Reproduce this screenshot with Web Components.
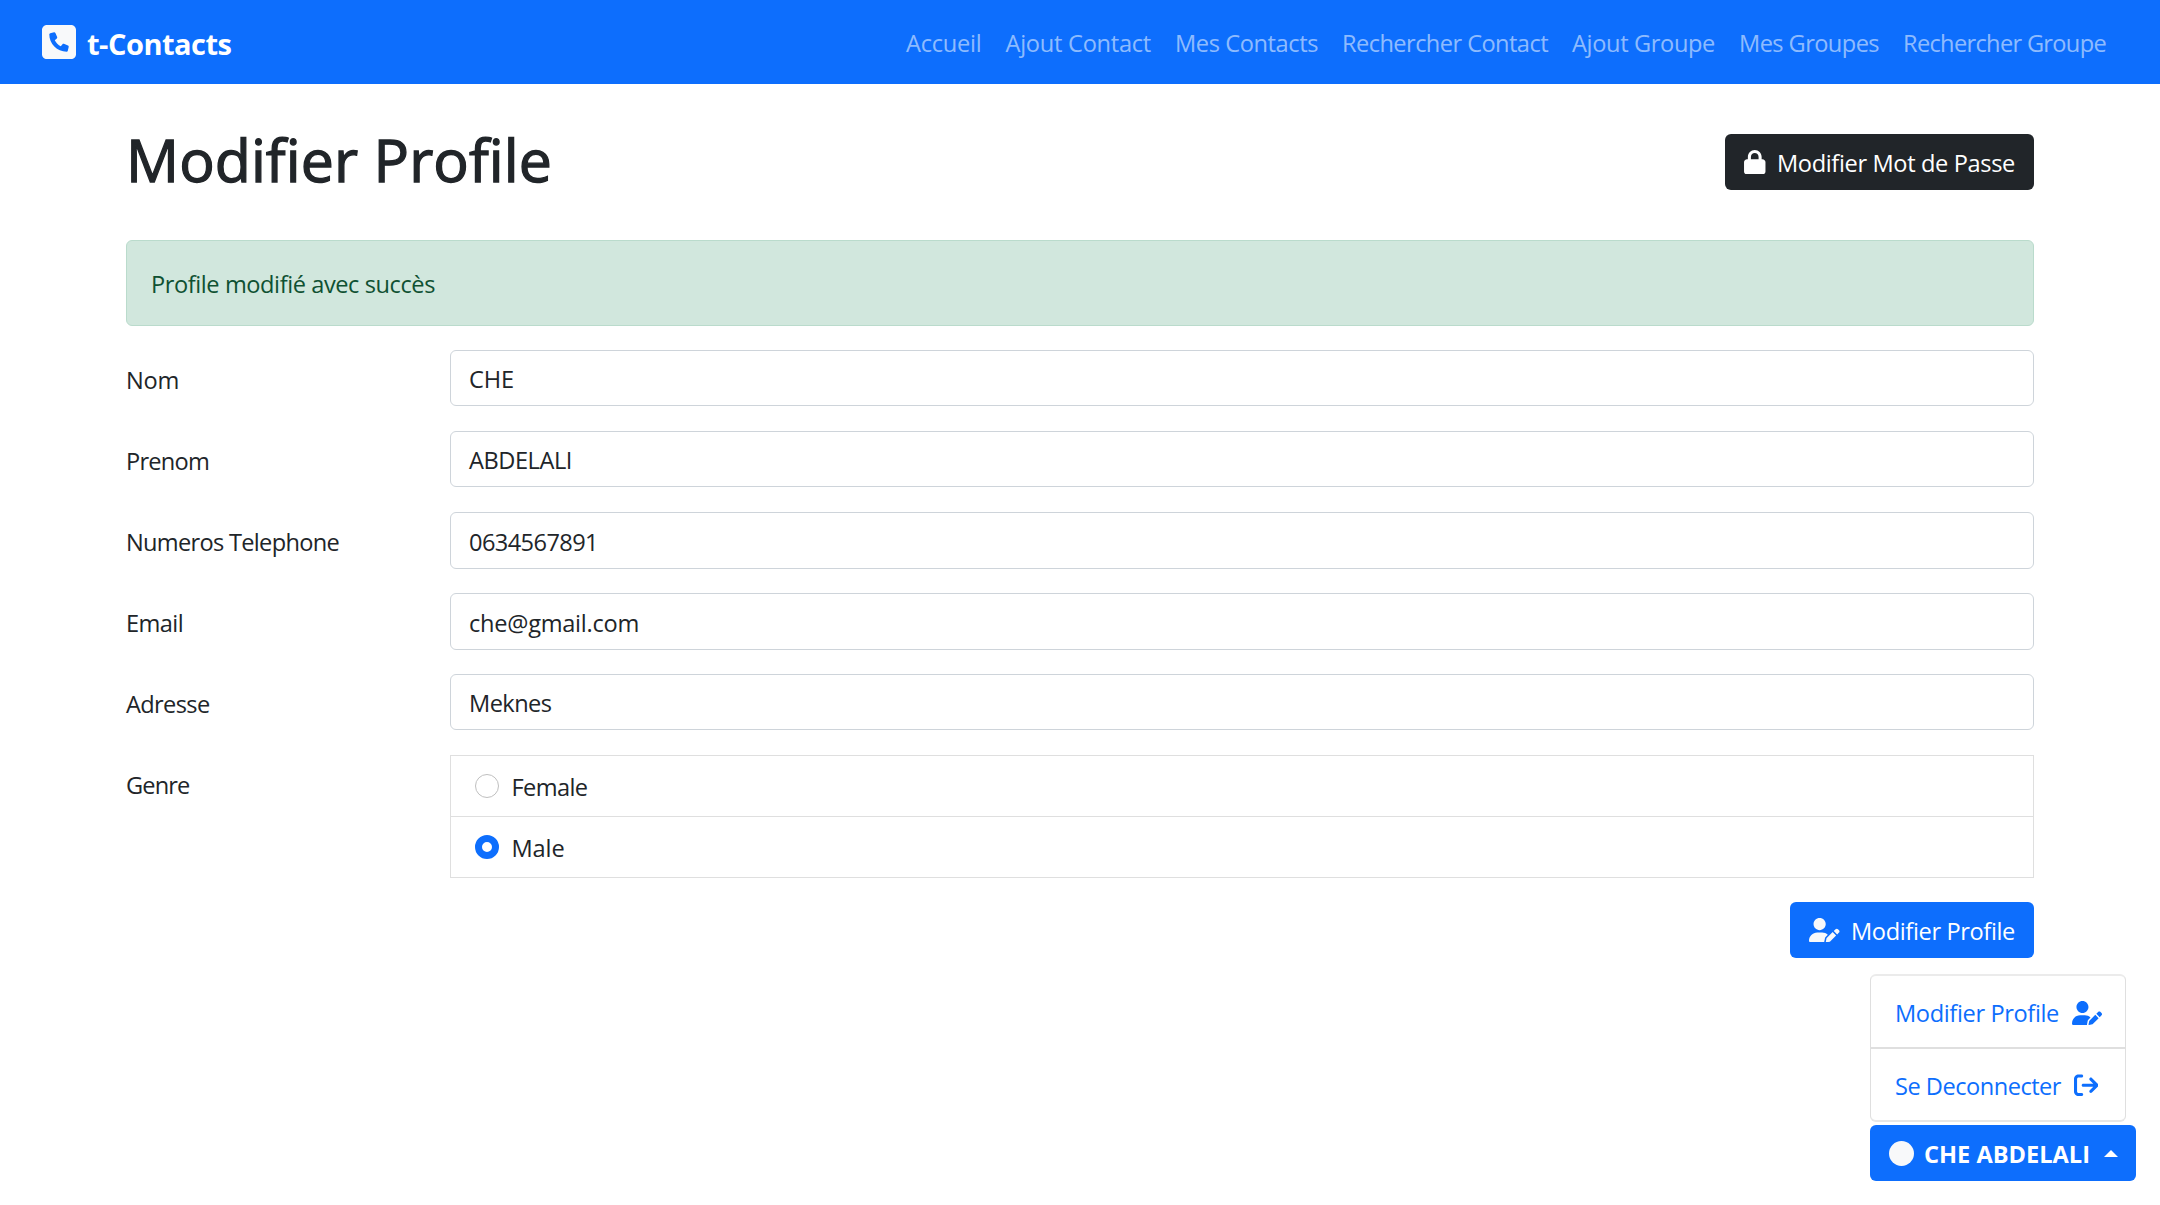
<!DOCTYPE html>
<html lang="fr">
<head>
<meta charset="utf-8">
<title>t-Contacts</title>
<style>
html,body{margin:0;padding:0;background:#fff}
body{font-family:"Open Sans","Noto Sans",sans-serif;font-size:23.6px;line-height:36px;color:#212529;height:1205px;overflow:hidden;position:relative}
</style>
</head>
<body>
<contacts-app></contacts-app>
<script>
const define = (name, html, setup) => customElements.define(name, class extends HTMLElement {
  connectedCallback() {
    if (this.shadowRoot) return;
    const t = document.createElement('template');
    t.innerHTML = html;
    this.attachShadow({ mode: 'open' }).append(t.content.cloneNode(true));
    if (setup) setup(this, this.shadowRoot);
  }
});

/* Text run tracked to an exact advance width (w). */
define('fit-text', `<style>:host{display:block;white-space:nowrap;flex:none;width:max-content}</style><slot></slot>`, el => {
  const w = +el.getAttribute('w');
  const n = [...el.textContent].length;
  const now = el.getBoundingClientRect().width;
  el.style.letterSpacing = ((w - now) / n) + 'px';
  el.style.width = w + 'px';
});

const ICONS = {
  phone: ['0 32 448 448', 'M384 32H64C28.65 32 0 60.65 0 96v320c0 35.35 28.65 64 64 64h320c35.35 0 64-28.65 64-64V96C448 60.65 419.3 32 384 32zM351.6 321.5l-11.62 50.39c-1.633 7.125-7.9 12.11-15.24 12.11c-126.1 0-228.7-102.6-228.7-228.8c0-7.328 4.984-13.59 12.11-15.22l50.38-11.63c7.344-1.703 14.88 2.109 17.93 9.062l23.27 54.28c2.719 6.391 .8828 13.83-4.492 18.22L168.3 232c16.99 34.61 45.14 62.58 79.74 79.57l22.02-26.88c4.4-5.375 11.8-7.2 18.2-4.5l54.31 23.28C349.5 306.5 353.3 314.1 351.6 321.5z'],
  lock: ['0 0 448 512', 'M80 192V144C80 64.47 144.5 0 224 0C303.5 0 368 64.47 368 144V192H384C419.3 192 448 220.7 448 256V448C448 483.3 419.3 512 384 512H64C28.65 512 0 483.3 0 448V256C0 220.7 28.65 192 64 192H80zM144 192H304V144C304 99.82 268.2 64 224 64C179.8 64 144 99.82 144 144V192z'],
  pen: ['0 0 640 512', 'M223.1 256c70.7 0 128-57.31 128-128s-57.3-128-128-128C152.4 0 95.1 57.31 95.1 128S152.4 256 223.1 256zM274.7 304H173.3C77.61 304 0 381.7 0 477.4C0 496.5 15.52 512 34.66 512h286.4c-1.246-5.531-1.43-11.31-.2832-17.04l14.28-71.41c1.943-9.723 6.676-18.56 13.68-25.56l45.72-45.72C363.7 322.4 321.2 304 274.7 304zM371.4 420.6c-2.514 2.512-4.227 5.715-4.924 9.203l-14.28 71.41c-1.258 6.289 4.293 11.84 10.59 10.59l71.42-14.29c3.482-.6992 6.682-2.406 9.195-4.922l125.3-125.3l-72.01-72.01L371.4 420.6zM629.5 255.7l-21.1-21.11c-14.06-14.06-36.85-14.06-50.91 0l-38.13 38.14l72.01 72.01l38.13-38.13C643.5 292.5 643.5 269.7 629.5 255.7z'],
  exit: ['0 0 512 512', 'M160 416H96c-17.67 0-32-14.33-32-32V128c0-17.67 14.33-32 32-32h64c17.67 0 32-14.33 32-32S177.7 32 160 32H96C42.98 32 0 74.98 0 128v256c0 53.02 42.98 96 96 96h64c17.67 0 32-14.33 32-32S177.7 416 160 416zM502.6 233.4l-128-128c-12.51-12.51-32.76-12.49-45.25 0c-12.5 12.5-12.5 32.75 0 45.25L402.8 224H192C174.3 224 160 238.3 160 256s14.31 32 32 32h210.8l-73.38 73.38c-12.5 12.5-12.5 32.75 0 45.25s32.75 12.5 45.25 0l128-128C515.1 266.1 515.1 245.9 502.6 233.4z'],
  circle: ['0 0 512 512', 'M256 0a256 256 0 1 0 0 512a256 256 0 1 0 0-512z']
};
define('app-icon', `<style>:host{display:block;flex:none}svg{display:block;fill:currentColor}</style><svg><path/></svg>`, (el, r) => {
  const [box, d] = ICONS[el.getAttribute('name')];
  const s = r.querySelector('svg');
  s.setAttribute('viewBox', box);
  s.setAttribute('width', el.getAttribute('width'));
  s.setAttribute('height', el.getAttribute('height'));
  r.querySelector('path').setAttribute('d', d);
});

define('nav-bar', `<style>
:host{display:flex;height:84px;box-sizing:border-box;padding:0 54px 0 42px;background:#0d6efd;align-items:center;justify-content:space-between}
.brand{display:flex;align-items:center;gap:11px;color:#fff;font-weight:700;font-size:29px}
.brand app-icon{color:#f8f9fa}
.brand fit-text{padding-top:3px}
nav{display:flex;gap:24px;color:rgba(255,255,255,.55);padding-top:2px}
</style>
<div class="brand"><app-icon name="phone" width="34" height="34"></app-icon><fit-text w="144.5">t-Contacts</fit-text></div>
<nav>
<fit-text w="75.5">Accueil</fit-text><fit-text w="145.5">Ajout Contact</fit-text><fit-text w="143">Mes Contacts</fit-text><fit-text w="206">Rechercher Contact</fit-text><fit-text w="143">Ajout Groupe</fit-text><fit-text w="140">Mes Groupes</fit-text><fit-text w="203">Rechercher Groupe</fit-text>
</nav>`);

define('app-button', `<style>
:host{display:flex;align-items:center;box-sizing:border-box;height:56px;border-radius:6px;padding:0 19px;color:#fff;background:#0d6efd;flex:none}
:host([dark]){background:#212529}
</style><slot></slot>`);

define('form-row', `<style>
:host{display:flex;height:56px;margin-bottom:25px}
:host([tall]){height:57px;margin-bottom:24px}
.label{width:324px;padding-top:12px;flex:none}
.box{flex:1;display:flex;align-items:center;box-sizing:border-box;border:1px solid #ced4da;border-radius:6px;padding:2px 18px 0}
:host([tall]) .box{padding-top:3px}
</style><div class="label"><slot name="label"></slot></div><div class="box"><slot></slot></div>`);

define('radio-option', `<style>
:host{display:flex;height:60px;align-items:center;padding-left:24px;gap:12px;border-bottom:1px solid #dfdfdf}
i{box-sizing:border-box;width:24px;height:24px;border-radius:50%;border:1px solid #bfbfbf;background:#fff}
:host([checked]) i{border:7px solid #0d6efd}
.t{padding:2px 0 0 .5px}
</style><i></i><div class="t"><slot></slot></div>`);

define('user-menu', `<style>
:host{position:absolute;left:1870px;top:974px;width:266px;color:#0d6efd}
.list{width:256px;box-sizing:border-box;border:1px solid #dfdfdf;border-top:2px solid #ebebeb;border-bottom:2px solid #e6e6e6;border-radius:6px;margin-bottom:3px;background:#fff}
.item{height:71px;display:flex;align-items:center;padding-left:24px;box-sizing:border-box}
.item+.item{border-top:2px solid #dfdfdf;height:73px}
.item fit-text{padding-top:3px}
.item app-icon{margin-left:12.5px;padding-top:2px}
app-button{font-weight:700}
app-button app-icon{color:#f8f9fa}
app-button fit-text{margin-left:10px;padding-top:1px}
b{border:7px solid transparent;border-top:0;border-bottom-color:#fff;margin-left:14px}
</style>
<div class="list">
<div class="item"><fit-text w="164">Modifier Profile</fit-text><app-icon name="pen" width="30" height="24"></app-icon></div>
<div class="item"><fit-text w="166">Se Deconnecter</fit-text><app-icon name="exit" width="24.5" height="24.5"></app-icon></div>
</div>
<app-button><app-icon name="circle" width="25" height="25"></app-icon><fit-text w="166">CHE ABDELALI</fit-text><b></b></app-button>`);

define('contacts-app', `<style>
:host{display:block}
main{padding:0 126px}
.head{display:flex;height:156px;box-sizing:border-box;padding-top:39px;justify-content:space-between;align-items:flex-start}
h1{margin:0;font-weight:500;font-size:59px;line-height:72px;-webkit-text-stroke:1.3px currentColor}
.head app-button{margin-top:11px}
app-button fit-text{padding-top:2px}
.alert{height:86px;box-sizing:border-box;border:1px solid #badbcc;border-radius:6px;background:#d1e7dd;color:#0f5132;padding:25px 24px 0;margin-bottom:24px}
.genre{display:flex;height:123px;margin-bottom:24px}
.genre>div:first-child{width:324px;padding-top:12px}
.opts{flex:1;border:1px solid #dfdfdf;border-bottom:0}
.end{display:flex;justify-content:flex-end}
.end app-icon{color:#f8f9fa}
</style>
<nav-bar></nav-bar>
<main>
<div class="head"><h1><fit-text w="426">Modifier Profile</fit-text></h1>
<app-button dark><app-icon name="lock" width="21.5" height="24.5"></app-icon><fit-text w="238" style="margin-left:11.5px">Modifier Mot de Passe</fit-text></app-button></div>
<div class="alert"><fit-text w="284">Profile modifié avec succès</fit-text></div>
<form-row><fit-text slot="label" w="53">Nom</fit-text><fit-text w="45">CHE</fit-text></form-row>
<form-row><fit-text slot="label" w="83">Prenom</fit-text><fit-text w="103">ABDELALI</fit-text></form-row>
<form-row tall><fit-text slot="label" w="213">Numeros Telephone</fit-text><fit-text w="129">0634567891</fit-text></form-row>
<form-row tall><fit-text slot="label" w="57">Email</fit-text><fit-text w="170">che@gmail.com</fit-text></form-row>
<form-row><fit-text slot="label" w="83.5">Adresse</fit-text><fit-text w="82.5">Meknes</fit-text></form-row>
<div class="genre"><div><fit-text w="63.5">Genre</fit-text></div><div class="opts">
<radio-option><fit-text w="76">Female</fit-text></radio-option>
<radio-option checked><fit-text w="53">Male</fit-text></radio-option></div></div>
<div class="end"><app-button><app-icon name="pen" width="30.5" height="24.4"></app-icon><fit-text w="164" style="margin-left:11.5px">Modifier Profile</fit-text></app-button></div>
</main>
<user-menu></user-menu>`);
</script>
</body>
</html>
